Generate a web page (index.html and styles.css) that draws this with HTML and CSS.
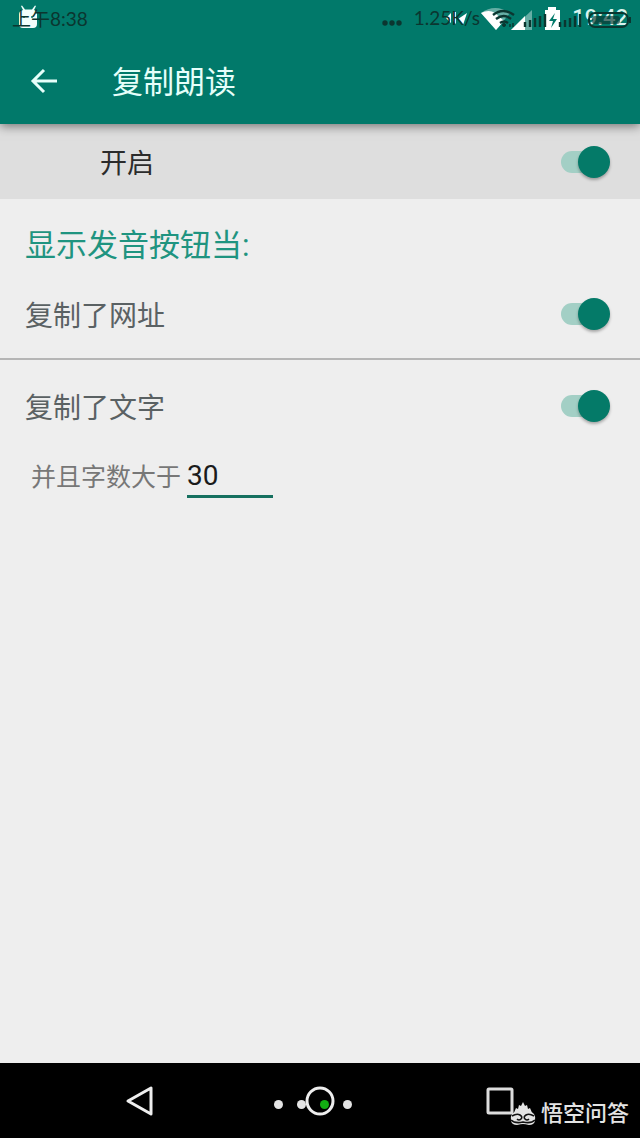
FILE: index.html
```html
<!DOCTYPE html>
<html lang="zh-CN">
<head>
  <meta charset="UTF-8">
  <meta name="viewport" content="width=device-width, initial-scale=1">
  <title>复制朗读</title>
  <link rel="stylesheet" href="styles.css">
</head>
<body>
  <header class="header">
    <div class="status">
      <div class="status-layer status-light">
        <svg width="22" height="24" viewBox="0 0 22 24" fill="#f2fffc" aria-hidden="true">
          <path d="M1 9q0-3 4-4L3 1l1-.5 3 4h7L17 .5l1 .5-2 4q3 1 3 4v10q0 4-4 4H5q-4 0-4-4z"/>
          <circle cx="6" cy="12" r="1" fill="#01796a"/><circle cx="14" cy="12" r="1" fill="#01796a"/>
        </svg>
        <svg class="push" width="118" height="26" viewBox="0 0 118 26" fill="#fff" aria-hidden="true">
          <path d="M0 14l5-5v10zM7 8h3v12l-3-3zM12 15l9-6-4 12z"/>
          <path d="M35 9q14-10 29 0L50 26z" opacity=".4"/>
          <path d="M35 9q8-4 14 0l9 8-8 9z"/>
          <path d="M86 6v20H65z" opacity=".4"/>
          <path d="M79 12v14H65z"/>
          <path d="M99 6h3V3h8v3h4v20H99z"/>
          <path d="M109 9l-6 8h4l-2 7 6-9h-4z" fill="#01796a"/>
        </svg>
        <span class="clock">19:42</span>
      </div>
      <div class="status-layer status-dark">
        <span>上午8:38</span>
        <svg class="push" width="20" height="24" viewBox="0 0 20 24" fill="#0b3630" aria-hidden="true">
          <circle cx="3" cy="18" r="2.7"/><circle cx="10" cy="18" r="2.7"/><circle cx="17" cy="18" r="2.7"/>
        </svg>
        <span class="speed">1.25K/s</span>
        <svg width="140" height="24" viewBox="0 0 140 24" fill="none" stroke="#0b3630" aria-hidden="true">
          <path d="M1 10q10-8 21 0M4 14q8-6 15 0M8 18q4-3 8 0" stroke-width="2.4"/>
          <circle cx="12" cy="20" r="1.5" fill="#0b3630"/>
          <path d="M18 22v-3M21 22v-4" stroke-width="1.5"/>
          <path d="M33 22v-5M38 22v-7M43 22V13M48 22V11M53 22V9M68 22v-5M73 22v-7M78 22v-9M83 22V11M88 22V9" stroke-width="2.4"/>
          <rect x="97" y="8" width="39" height="14" rx="6" stroke-width="2"/>
          <rect x="100" y="11" width="28" height="8" rx="3" fill="#0b3630" fill-opacity=".65" stroke="none"/>
          <path d="M138 12v6" stroke-width="2"/>
        </svg>
      </div>
    </div>
    <div class="toolbar">
      <button class="back" type="button" aria-label="返回">
        <svg width="28" height="28" viewBox="0 0 28 28" fill="none" stroke="#e6fffa" stroke-width="3">
          <path d="M27 14H3M14 3L3 14l11 11"/>
        </svg>
      </button>
      <h1>复制朗读</h1>
    </div>
  </header>

  <main>
    <label class="row row-main">
      <span>开启</span>
      <input class="switch" type="checkbox" role="switch" checked>
    </label>
    <h2>显示发音按钮当:</h2>
    <label class="row row-url">
      <span>复制了网址</span>
      <input class="switch" type="checkbox" role="switch" checked>
    </label>
    <label class="row row-text">
      <span>复制了文字</span>
      <input class="switch" type="checkbox" role="switch" checked>
    </label>
    <div class="limit">
      <label for="count">并且字数大于</label>
      <input id="count" type="text" inputmode="numeric" value="30">
    </div>
  </main>

  <nav class="navbar">
    <button type="button" aria-label="返回">
      <svg width="32" height="32" viewBox="0 0 32 32" fill="none" stroke="#eee" stroke-width="3" stroke-linejoin="round">
        <path d="M27 3v26L4 16z"/>
      </svg>
    </button>
    <button type="button" aria-label="主屏幕">
      <svg width="32" height="32" viewBox="0 0 32 32" fill="none" stroke="#eee" stroke-width="3">
        <circle cx="16" cy="16" r="13"/>
      </svg>
    </button>
    <button type="button" aria-label="最近任务">
      <svg width="32" height="32" viewBox="0 0 32 32" fill="none" stroke="#ddd" stroke-width="3">
        <rect x="4" y="4" width="24" height="24" rx="1"/>
      </svg>
    </button>
    <div class="dots">
      <i></i><i></i><i class="on"></i><i></i>
    </div>
    <div class="brand">
      <svg width="26" height="24" viewBox="0 0 26 24" aria-hidden="true">
        <path d="M2 12q3-2 4-6l2 1 1-4 2 1 2-4 2 4 2-1 1 4 2-1q1 4 4 6 2 3 1 7-1 4-6 4-4-1-6-1t-6 1q-5 0-6-4-1-4 1-7z" fill="#e4e4e4"/>
        <path d="M2 14q5-3 8-1 3 2 1 4-2 2-4 0M24 14q-5-3-8-1-3 2-1 4 2 2 4 0M1 18q4 4 12 2 8 2 12-2" fill="none" stroke="#111" stroke-width="1.6"/>
      </svg>
      <span>悟空问答</span>
    </div>
  </nav>
</body>
</html>
```

FILE: styles.css
```css
* { box-sizing: border-box; }
body {
  margin: 0;
  min-height: 100vh;
  display: flex;
  flex-direction: column;
  background: #eee;
  color: #5a6163;
  font-family: Roboto, "Noto Sans CJK SC", sans-serif;
  font-size: 28px;
}
h1, h2 { margin: 0; font-weight: 400; font-size: 31px; }
button { padding: 0; border: 0; background: none; display: flex; }

.header {
  position: relative;
  z-index: 1;
  background: #01796a;
  box-shadow: 0 2px 10px rgba(0, 0, 0, 0.5);
}
.status { position: relative; height: 38px; }
.status-layer {
  position: absolute;
  inset: 0;
  display: flex;
  align-items: center;
  padding-bottom: 4px;
  white-space: nowrap;
}
.status-light { padding-left: 18px; padding-right: 12px; color: #d9f3ee; }
.status-dark {
  padding-left: 12px;
  padding-right: 8px;
  color: #0b3630;
  font-family: Lato, "Noto Sans CJK SC", sans-serif;
  font-size: 19px;
}
.push { margin-left: auto; }
.clock { margin-left: 8px; font-size: 22px; font-weight: 500; }
.speed { margin: 0 12px; }
.toolbar {
  display: flex;
  align-items: center;
  height: 86px;
  padding: 0 30px;
  gap: 54px;
  color: #e6fffa;
}
.toolbar h1 { padding-bottom: 4px; }

main { flex: 1; }
.row {
  display: flex;
  align-items: center;
  justify-content: space-between;
  padding: 0 30px 0 25px;
}
.row-main {
  height: 75px;
  padding-left: 100px;
  background: #dedede;
  color: #2b2b2b;
  font-size: 27px;
}
h2 { padding: 24px 25px 0; line-height: 46px; color: #1f9480; }
.row-url { height: 91px; border-bottom: 2px solid #b5b5b5; }
.row-text { height: 92px; }

.switch {
  appearance: none;
  position: relative;
  width: 49px;
  height: 32px;
  margin: 0;
}
.switch::before {
  content: "";
  position: absolute;
  left: 0;
  top: 5px;
  width: 44px;
  height: 22px;
  border-radius: 11px;
  background: #bbb;
}
.switch::after {
  content: "";
  position: absolute;
  left: 0;
  top: 0;
  width: 32px;
  height: 32px;
  border-radius: 50%;
  background: #f5f5f5;
  box-shadow: 0 2px 3px rgba(0, 0, 0, 0.3);
}
.switch:checked::before { background: #a3cfc5; }
.switch:checked::after { left: auto; right: 0; background: #047a68; }

.limit {
  display: flex;
  align-items: center;
  gap: 6px;
  padding: 0 31px;
  font-size: 25px;
  color: #777;
}
.limit input {
  width: 86px;
  height: 46px;
  padding: 3px 0 0;
  border: 0;
  border-bottom: 3px solid #16705f;
  background: none;
  color: #1b1b1b;
  font: inherit;
  font-size: 28px;
  outline: none;
}

.navbar {
  position: relative;
  display: flex;
  align-items: center;
  justify-content: center;
  gap: 148px;
  height: 75px;
  background: #000;
}
.dots {
  position: absolute;
  left: 50%;
  top: 37px;
  margin-left: -46px;
  display: flex;
  gap: 14px;
}
.dots i { width: 9px; height: 9px; border-radius: 50%; background: #e4e4e4; }
.dots .on { background: #12ad12; }
.brand {
  position: absolute;
  right: 11px;
  bottom: 8px;
  display: flex;
  align-items: center;
  gap: 5px;
  color: #e4e4e4;
  font-size: 22px;
  font-weight: 500;
  line-height: 32px;
}
```
